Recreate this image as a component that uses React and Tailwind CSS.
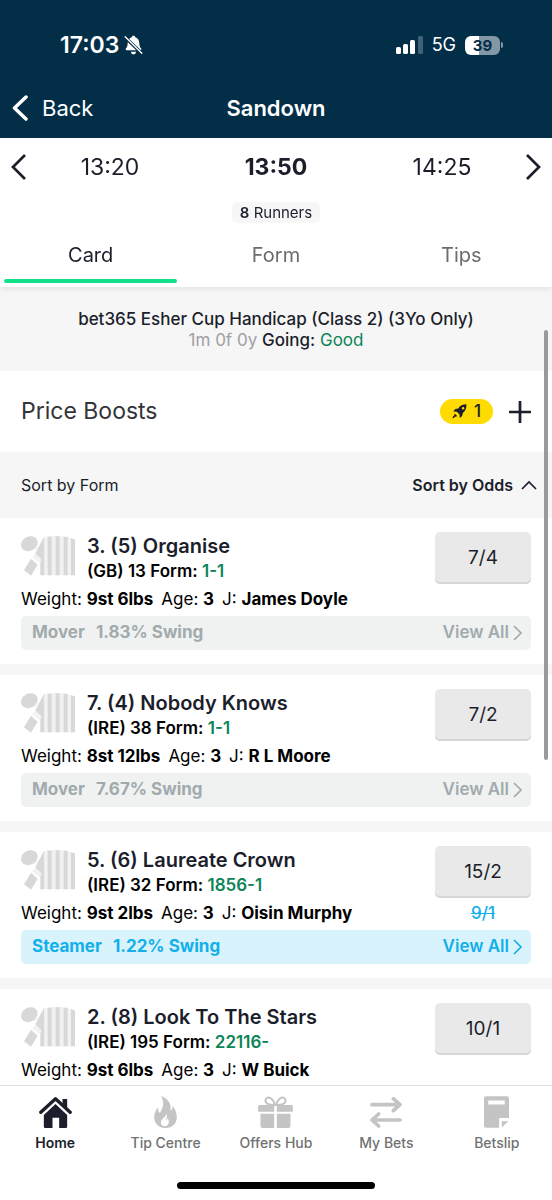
import React from "react";

const runners = [
  { no: 3, draw: 5, name: "Organise", origin: "(GB) 13", form: "1-1", weight: "9st 6lbs", age: 3, jockey: "James Doyle", odds: "7/4", move: "Mover", swing: "1.83% Swing" },
  { no: 7, draw: 4, name: "Nobody Knows", origin: "(IRE) 38", form: "1-1", weight: "8st 12lbs", age: 3, jockey: "R L Moore", odds: "7/2", move: "Mover", swing: "7.67% Swing" },
  { no: 5, draw: 6, name: "Laureate Crown", origin: "(IRE) 32", form: "1856-1", weight: "9st 2lbs", age: 3, jockey: "Oisin Murphy", odds: "15/2", was: "9/1", move: "Steamer", swing: "1.22% Swing" },
  { no: 2, draw: 8, name: "Look To The Stars", origin: "(IRE) 195", form: "22116-", weight: "9st 6lbs", age: 3, jockey: "W Buick", odds: "10/1" },
];

function Chevron({ className, d, box = "0 0 16 26", width = 2.7 }) {
  return (
    <svg aria-hidden="true" viewBox={box} className={className} fill="none" stroke="currentColor" strokeWidth={width}>
      <path d={d} />
    </svg>
  );
}

function BellOff() {
  return (
    <svg aria-hidden="true" viewBox="0 0 56 60" className="h-5 w-[19px]">
      <path fill="#fff" d="M28 2c3 0 5 2 5.500 4.500C42 9 45 16 45.500 25c.4 9 2 12 5 15 2 2 1 6-2 6H7.500c-3 0-4-4-2-6 3-3 4.600-6 5-15C11 16 14 9 22.500 6.500 23 4 25 2 28 2zM20 50h16c-1 5-4 8-8 8s-7-3-8-8z" />
      <path stroke="#022e48" strokeWidth="10" d="M0 4l56 54" />
      <path stroke="#fff" strokeWidth="4" strokeLinecap="round" d="M3 5l50 50" />
    </svg>
  );
}

function Silks() {
  return (
    <svg aria-hidden="true" viewBox="0 0 162 120" className="mt-1 h-10 w-[54px] shrink-0">
      <ellipse cx="25" cy="23" rx="26" ry="21" transform="rotate(-30 25 23)" fill="#d8d8d8" />
      <path d="M36 42l14-18-2 14z" fill="#eee" />
      <path d="M69 3L42 55c6 9 11 14 16 17v46h104V10C132-2 98-2 69 3z" fill="#f2f2f2" />
      <path d="M69 3L43 52c6 7 11 11 15 13v53h12zM80 2h12v116H80zM104 1h12v117h-12zM128 2h12v116h-12zM150 6l12 5v107h-12z" fill="#d8d8d8" />
      <path d="M42 55l20 16-5 11-24-18z" fill="#f2f2f2" />
      <path d="M30 68l20 18-20 33-21-16z" fill="#d8d8d8" />
    </svg>
  );
}

function Rocket() {
  return (
    <svg aria-hidden="true" viewBox="0 0 46 46" className="h-[15px] w-[15px]" fill="#1c1e2c">
      <path fillRule="evenodd" d="M44 1c1 13-3 20-11 27l-2 9-7 6-1-11-8-8-11-1 6-8 9-1C25 5 33 1 44 1zM34 9a4 4 0 1 0 .1 8 4 4 0 0 0-.1-8z" />
      <path d="M8 29l8 8-4 2-3-1-2 4-6 2 3-7 3-2z" />
    </svg>
  );
}

function House() {
  return (
    <svg aria-hidden="true" viewBox="0 0 98 96" className="h-8 w-[33px]" fill="currentColor">
      <path d="M14 57l35-33 35 33v35q0 4-4 4H60V65H40v31H18q-4 0-4-4z" />
      <path d="M70 9h14v27L70 23z" />
      <path d="M5 49L49 8l44 41" fill="none" stroke="currentColor" strokeWidth="10" strokeLinecap="round" strokeLinejoin="round" />
    </svg>
  );
}

function Flame() {
  return (
    <svg aria-hidden="true" viewBox="0 0 68 96" className="h-8 w-[23px]" fill="currentColor">
      <path fillRule="evenodd" d="M21 0c22 8 31 25 28 44 5-3 7-8 6-15 8 10 13 22 13 35 0 19-14 32-34 32S0 83 0 64c0-13 5-22 12-31-1 8 0 14 5 18C28 34 31 18 21 0zm16 51c1 12-17 16-17 28 0 8 5 12 12 12s12-5 12-12c0-5-1-9-3-12-2 3-3 4-6 5 3-7 4-14 2-21z" />
    </svg>
  );
}

function Gift() {
  return (
    <svg aria-hidden="true" viewBox="0 0 104 96" className="h-8 w-[35px]" fill="currentColor">
      <path d="M3 27h45v20H0V30q0-3 3-3zM56 27h45q3 0 3 3v17H56zM7 53h41v43H13q-6 0-6-6zM56 53h41v37q0 6-6 6H56z" />
      <path d="M50 27C30 28 18 20 23 10 29-1 45 5 50 27zM54 27c20 1 32-7 27-17C75-1 59 5 54 27z" fill="none" stroke="currentColor" strokeWidth="6" />
    </svg>
  );
}

function Swap() {
  return (
    <svg aria-hidden="true" viewBox="0 0 96 96" className="h-8 w-8" fill="none" stroke="currentColor" strokeWidth="11" strokeLinecap="round" strokeLinejoin="round">
      <path d="M6 26h82M70 8l20 18-20 18M90 72H8M26 54L6 72l20 18" />
    </svg>
  );
}

function Slip() {
  return (
    <svg aria-hidden="true" viewBox="0 0 76 96" className="h-8 w-[25px]" fill="currentColor">
      <path fillRule="evenodd" d="M6 0h64q6 0 6 6v60H46v30H6q-6 0-6-6V6q0-6 6-6zm7 13v12h50V13zM54 76h20L54 95z" />
    </svg>
  );
}

const tabs = ["Card", "Form", "Tips"];
const nav = [
  { label: "Home", icon: <House />, active: true },
  { label: "Tip Centre", icon: <Flame /> },
  { label: "Offers Hub", icon: <Gift /> },
  { label: "My Bets", icon: <Swap /> },
  { label: "Betslip", icon: <Slip /> },
];

function Runner({ r }) {
  const steam = r.move === "Steamer";
  return (
    <li className="bg-white px-[21px] py-[14px]">
      <div className="flex items-start justify-between">
        <div className="min-w-0">
          <div className="flex gap-3">
            <Silks />
            <div>
              <h2 className="text-xl leading-7 font-semibold text-[#1c1e2c]">
                {r.no}. ({r.draw}) {r.name}
              </h2>
              <p className="text-[17px] leading-[22px] font-semibold">
                {r.origin} Form: <span className="text-[#0b8457]">{r.form}</span>
              </p>
            </div>
          </div>
          <p className="mt-1 flex gap-2 text-[17px] leading-[26px] whitespace-nowrap">
            <span>Weight: <b className="font-bold">{r.weight}</b></span>
            <span>Age: <b className="font-bold">{r.age}</b></span>
            <span>J: <b className="font-bold">{r.jockey}</b></span>
          </p>
        </div>
        <div className="flex w-24 shrink-0 flex-col items-center">
          <button className="h-[52px] w-full rounded-[5px] bg-[#e9e9e9] text-[19px] text-[#1c1e2c] shadow-[inset_0_-2px_0_#d6d6d6]">{r.odds}</button>
          {r.was && <s className="mt-[3px] text-[17px] leading-6 font-medium text-[#12b0ea]">{r.was}</s>}
        </div>
      </div>
      {r.move && (
        <div className={"mt-1 flex h-[34px] items-center justify-between rounded-[5px] pr-2 pl-[11px] text-[17px] font-bold " + (steam ? "bg-[#d9f3fc] text-[#12b0ea]" : "bg-[#f0f2f2] text-[#a1aaad]")}>
          <span className="flex gap-[11px]">
            <span>{r.move}</span>
            <span>{r.swing}</span>
          </span>
          <button className="flex items-center gap-1 font-semibold">
            View All
            <Chevron className="h-4 w-[10px]" box="0 0 10 16" width={1.7} d="M1 1l7 7-7 7" />
          </button>
        </div>
      )}
    </li>
  );
}

export default function App() {
  return (
    <div className="relative flex h-screen flex-col overflow-hidden bg-white font-['Inter','Liberation_Sans',sans-serif] text-black">
      <header className="shrink-0 bg-[#022e48] text-white">
        <div className="flex h-[78px] items-center justify-between pt-3 pr-[49px] pl-[60px]">
          <div className="flex items-center gap-[5px] text-[23px] font-semibold">
            17:03 <BellOff />
          </div>
          <div className="flex items-center gap-[9px]">
            <svg aria-hidden="true" viewBox="0 0 27 18" className="h-[18px] w-[27px]" fill="#fff">
              <rect y="11" width="5" height="7" rx="1.500" />
              <rect x="7" y="8" width="5" height="10" rx="1.500" />
              <rect x="14" y="4" width="5" height="14" rx="1.500" />
              <rect x="22" width="5" height="18" rx="1.500" opacity=".25" />
            </svg>
            <span className="text-lg leading-6">5G</span>
            <span className="flex items-center gap-px">
              <span className="flex h-[19px] w-[35px] items-center justify-center rounded-[6px] bg-linear-to-r from-white from-39% to-[#8397a4] to-39% text-[15px] leading-[19px] font-bold text-[#022e48]">39</span>
              <span className="h-[6px] w-[2px] rounded-r bg-[#8397a4]" />
            </span>
          </div>
        </div>
        <div className="grid h-[60px] grid-cols-3 items-center">
          <button className="flex items-center gap-[14px] pl-3 text-[22px]">
            <svg aria-hidden="true" viewBox="0 0 16 26" className="h-[26px] w-4" fill="none" stroke="currentColor" strokeWidth="3.500" strokeLinecap="round" strokeLinejoin="round">
              <path d="M14 2L2.500 13 14 24" />
            </svg>
            Back
          </button>
          <h1 className="text-center text-[22px] font-semibold">Sandown</h1>
        </div>
      </header>

      <section className="z-10 shrink-0 bg-white text-[#1c1e2c] shadow-[0_2px_6px_rgba(0,0,0,0.08)]">
        <div className="flex h-[58px] items-center px-[11px]">
          <button aria-label="Earlier race"><Chevron className="h-[26px] w-4" d="M14 1L2 13l12 12" /></button>
          <div className="grid flex-1 grid-cols-3 text-[23px]">
            <button>13:20</button>
            <button className="font-bold">13:50</button>
            <button>14:25</button>
          </div>
          <button aria-label="Later race"><Chevron className="h-[26px] w-4" d="M2 1l12 12L2 25" /></button>
        </div>
        <div className="flex justify-center pt-[6px]">
          <span className="rounded-[5px] bg-[#f7f7f7] px-2 text-[15px] leading-[21px]"><b className="font-semibold">8</b> Runners</span>
        </div>
        <div role="tablist" className="grid grid-cols-3 gap-3 px-1">
          {tabs.map((t, i) => (
            <button key={t} role="tab" aria-selected={i === 0} className={"flex flex-col items-center text-xl " + (i === 0 ? "text-[#1c1e2c]" : "text-[#6b6c70]")}>
              <span className="flex h-14 items-center pt-2">{t}</span>
              <span className={"mb-1 h-1 w-full rounded-full " + (i === 0 ? "bg-[#13e08a]" : "")} />
            </button>
          ))}
        </div>
      </section>

      <main className="min-h-0 flex-1 overflow-y-auto bg-[#f6f6f6] [scrollbar-width:none]">
        <div className="flex h-[84px] flex-col items-center justify-center pt-[2px] text-[17px] leading-[21px] text-[#1c1e2c]">
          <p className="font-medium">bet365 Esher Cup Handicap (Class 2) (3Yo Only)</p>
          <p><span className="text-[#a0a0a5]">1m 0f 0y</span> <span className="font-medium">Going:</span> <span className="text-[#0b8457]">Good</span></p>
        </div>
        <div className="flex h-[81px] items-center justify-between bg-white px-[21px]">
          <h2 className="text-[23px] text-[#333438]">Price Boosts</h2>
          <div className="flex items-center gap-4">
            <span className="flex h-[25px] w-[53px] items-center justify-center gap-[7px] rounded-full bg-[#ffdb00] text-[17px] font-medium text-[#1c1e2c]"><Rocket />1</span>
            <button aria-label="Show price boosts"><Chevron className="h-[22px] w-[22px] text-[#1c1e2c]" box="0 0 22 22" d="M11 0v22M0 11h22" /></button>
          </div>
        </div>
        <div className="flex h-[66px] items-center justify-between pr-[15px] pl-[21px] text-base text-[#1c1e2c]">
          <button>Sort by Form</button>
          <button className="flex items-center gap-2 font-semibold">
            Sort by Odds
            <Chevron className="h-[10px] w-4" box="0 0 16 10" width={1.7} d="M1 9l7-7 7 7" />
          </button>
        </div>
        <ul className="flex flex-col gap-[11px]">
          {runners.map((r) => <Runner key={r.no} r={r} />)}
        </ul>
      </main>
      <div className="absolute top-[330px] right-1 z-20 h-[430px] w-1 rounded-full bg-[#9a9a9a]" />

      <nav className="shrink-0 border-t border-[#dedede] bg-white">
        <div className="grid h-[75px] grid-cols-5">
          {nav.map((n) => (
            <a key={n.label} href="#" className={"flex flex-col items-center pt-2 text-sm " + (n.active ? "font-semibold text-[#1c1e2c]" : "font-medium text-[#c4c4c4]")}>
              <span className="flex h-9 items-center">{n.icon}</span>
              <span className={"mt-[3px] leading-5 " + (n.active ? "" : "text-[#717171]")}>{n.label}</span>
            </a>
          ))}
        </div>
        <div className="flex h-[39px] justify-center pt-[21px]">
          <span className="h-[7px] w-[198px] rounded-full bg-black" />
        </div>
      </nav>
    </div>
  );
}
